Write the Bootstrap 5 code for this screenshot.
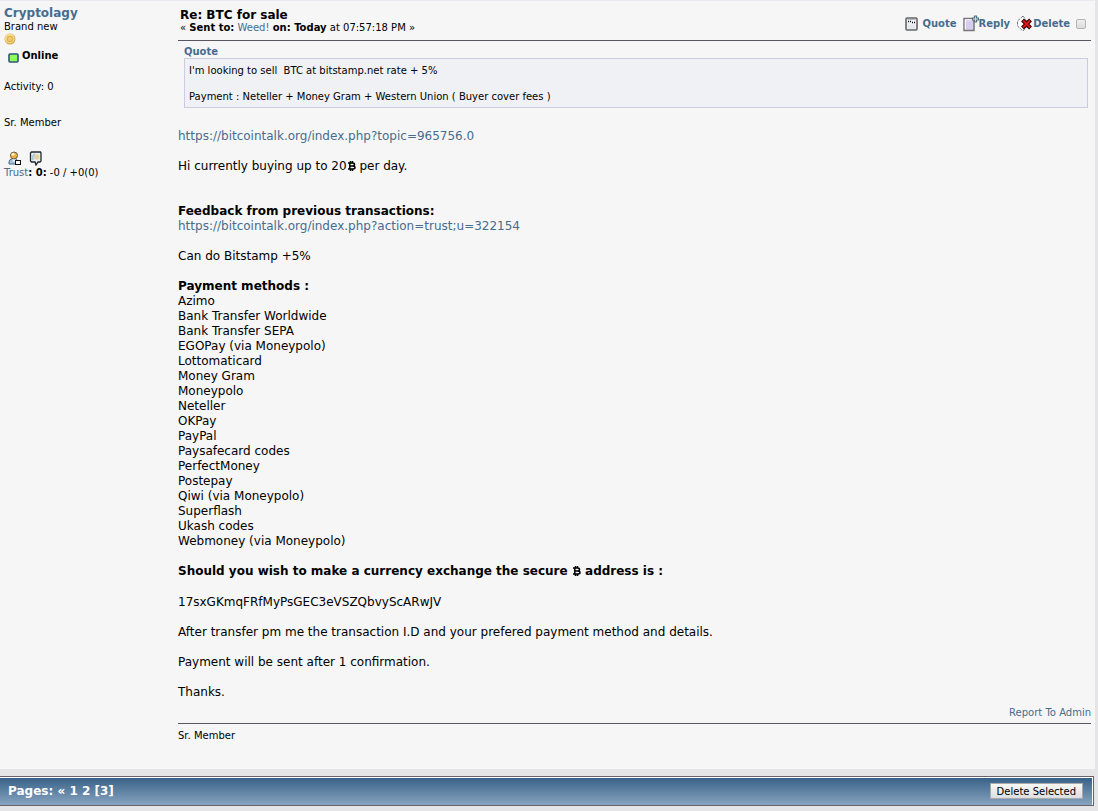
<!DOCTYPE html>
<html lang="en">
<head>
<meta charset="utf-8">
<meta name="viewport" content="width=device-width, initial-scale=1">
<title>Re: BTC for sale</title>
<link rel="stylesheet" href="https://cdn.jsdelivr.net/npm/bootstrap@5.3.0/dist/css/bootstrap.min.css">
<style>
body{background:#e5e5e8;color:#000;font:12px/15px Verdana,"DejaVu Sans",sans-serif}
a{color:#476c8e;text-decoration:none}
a:hover{text-decoration:underline}
svg{display:block;flex:none}
.post{background:#f6f6f6;border-top:1px solid #e9e9f2;margin-right:3px}
.author{width:178px;flex:none;padding:5px 4px}
.tiny{font-size:10px;line-height:13px}
.name{font-size:12px;line-height:14px}
.online{height:14px;margin-top:4px;padding-left:4px;gap:3px}
.activity{margin-top:17px}
.rank{margin-top:23px}
.contact{margin:22px 0 0 4px}
.content{padding:6px 4px 27px 0}
.subject{border-bottom:1px solid #5b5560;padding:0 0 7px 2px}
.subject h1{font-size:12px;line-height:16px}
.actions{font-size:10px;padding:7px 5px 0 0;gap:6px}
.actions input{appearance:none;width:10px;height:10px;border:1px solid #b4b4b4;border-radius:2px;background:linear-gradient(#f0f0f0,#dcdcdc);margin:0}
.actions input:checked{background:#476c8e}
.quoted{margin:4px 3px 0 6px}
.quoted blockquote{background:#f0f1f4;border:1px solid #cccce0;padding:5px 4px 4px;margin:0;white-space:pre-wrap}
.message{margin-top:21px}
.message p,.message ul{margin-bottom:15px}
.message .apart{margin-top:30px}
.message .address{margin-top:16px}
.btc{display:inline-block;vertical-align:-1px}
.report{margin-top:6px}
.signature{border-top:1px solid #5b5560;margin-top:4px;padding-top:5px}
.pager{margin:7px 4px 0 0;border:1px solid #6a6468;border-left:0;box-shadow:inset 0 1px #fff,inset -1px 0 #fff;background:linear-gradient(#355f86,#88a4c0);height:30px;padding:0 10px 0 8px;color:#fff}
.pager a{color:#fff}
.remove{font-size:10px;line-height:13px;border:1px solid #a9a9a9;background:linear-gradient(#f8f8f8,#dedede);color:#000;padding:0 6px;height:16px}
</style>
</head>
<body>
<article class="post d-flex">
  <aside class="author tiny">
    <a href="#" class="name d-block fw-bold">Cryptolagy</a>
    <div>Brand new</div>
    <svg width="12" height="12" viewBox="0 0 12 12"><circle cx="6" cy="6" r="5.500" fill="#d9a94c"/><circle cx="5.700" cy="5.500" r="4.800" fill="#f5dc90"/><circle cx="6" cy="6" r="3.300" fill="#ddb04c"/><circle cx="6" cy="6" r="2.300" fill="#efca6c"/></svg>
    <div class="online d-flex"><svg class="mt-1" width="11" height="10"><rect x="1" y="1" width="9" height="8" rx="1" fill="#8dff5b" stroke="#31517b" stroke-width="1.600"/></svg><b>Online</b></div>
    <div class="activity">Activity: 0</div>
    <div class="rank">Sr. Member</div>
    <div class="contact d-flex gap-2">
      <a href="#" aria-label="Profile"><svg width="13" height="15" viewBox="0 0 13 15"><path d="M1 13v-2q0-3 4-3.500t5 3.500v2z" fill="#a6c4e0" stroke="#4a6684"/><circle cx="6" cy="4.500" r="3.500" fill="#efb23c" stroke="#6a5b44"/><circle cx="5" cy="3.200" r="1.500" fill="#fff3c6"/><path d="M4 8.500l2 2.500 2-2.500z" fill="#f2f7fc"/><rect x="7.500" y="9.500" width="5" height="4" fill="#fff" stroke="#111"/></svg></a>
      <a href="#" aria-label="Personal message"><svg width="13" height="15" viewBox="0 0 13 15"><path d="M2.500 1h9l.5 1v8l-1 1H9l-2 3-1-3H2.500l-1-1V2z" fill="#e9eef3" stroke="#20272d" stroke-width="1.300"/><circle cx="7.700" cy="6" r="2.800" fill="#e2d3a0"/><path d="M4 9q-1-5 2-6" stroke="#abc4dc" stroke-width="1.600" fill="none"/></svg></a>
    </div>
    <div><a href="#">Trust</a><b>: 0:</b> -0 / +0(0)</div>
  </aside>
  <div class="content flex-grow-1">
    <header class="subject d-flex justify-content-between">
      <div>
        <h1 class="fw-bold mb-0">Re: BTC for sale</h1>
        <div class="tiny lh-1">« <b>Sent to:</b> <a href="#">Weed!</a> <b>on: Today</b> at 07:57:18 PM »</div>
      </div>
      <div class="actions d-flex align-items-center fw-bold">
        <a href="#" class="d-flex align-items-center"><svg class="me-1" width="13" height="14" viewBox="0 0 13 14"><rect x="1" y="1" width="11" height="12" rx="1" fill="#eeeff4" stroke="#666" stroke-width="1.600"/><path d="M2.500 2.500h8" stroke="#b9b9c4"/><path d="M3 4.500h1M5 4.500h1M7 5.500h1M9 5.500h1" stroke="#111" stroke-width="1.600"/><path d="M3 9h7M3 11h7" stroke="#dfe0e8"/></svg>Quote</a>
        <a href="#" class="d-flex align-items-center"><svg width="16" height="17" viewBox="0 0 16 17"><path d="M1 3.500h10v12H1z" fill="#d6ccec" stroke="#777" stroke-width="1.500"/><path d="M2.300 14.500V4.800H10" stroke="#fff" fill="none"/><path d="M11.500 1h2v2h2v2h-2v2h-2V5h-2V3h2z" fill="#dfe8ee" stroke="#55707f" stroke-width="1.200"/></svg>Reply</a>
        <a href="#" class="d-flex align-items-center"><svg width="17" height="17" viewBox="0 0 17 17"><path d="M7 1L1.500 6v5L7 16l6-7z" fill="#fff" stroke="#777" stroke-dasharray="3 1"/><path d="M6.500 5l8 8M14.500 5l-8 8" stroke="#200" stroke-width="4"/><path d="M7 5.500l7 7M14 5.500l-7 7" stroke="#e5141c" stroke-width="2"/></svg>Delete</a>
        <input type="checkbox" aria-label="Select message">
      </div>
    </header>
    <section class="quoted tiny">
      <a href="#" class="fw-bold">Quote</a>
      <blockquote>I'm looking to sell  BTC at bitstamp.net rate + 5%

Payment : Neteller + Money Gram + Western Union ( Buyer cover fees )</blockquote>
    </section>
    <section class="message">
      <p><a href="#">https://bitcointalk.org/index.php?topic=965756.0</a></p>
      <p>Hi currently buying up to 20<svg class="btc" width="9" height="10" viewBox="0 0 9 10"><path d="M1 2h4.500q2 0 2 1.500T5.500 5q2.500 0 2.500 1.500T6 8H1M2.800 2v6M3 5h3M3.500 0v2M5.500 0v2M3.500 8v2M5.500 8v2" fill="none" stroke="#000" stroke-width="1.500"/></svg> per day.</p>
      <p class="apart"><b>Feedback from previous transactions:</b><br><a href="#">https://bitcointalk.org/index.php?action=trust;u=322154</a></p>
      <p>Can do Bitstamp +5%</p>
      <b>Payment methods :</b>
      <ul class="list-unstyled">
        <li>Azimo</li><li>Bank Transfer Worldwide</li><li>Bank Transfer SEPA</li><li>EGOPay (via Moneypolo)</li><li>Lottomaticard</li><li>Money Gram</li><li>Moneypolo</li><li>Neteller</li><li>OKPay</li><li>PayPal</li><li>Paysafecard codes</li><li>PerfectMoney</li><li>Postepay</li><li>Qiwi (via Moneypolo)</li><li>Superflash</li><li>Ukash codes</li><li>Webmoney (via Moneypolo)</li>
      </ul>
      <p class="fw-bold">Should you wish to make a currency exchange the secure <svg class="btc" width="9" height="10" viewBox="0 0 9 10"><path d="M1 2h4.500q2 0 2 1.500T5.500 5q2.500 0 2.500 1.500T6 8H1M2.800 2v6M3 5h3M3.500 0v2M5.500 0v2M3.500 8v2M5.500 8v2" fill="none" stroke="#000" stroke-width="1.500"/></svg> address is :</p>
      <p class="address">17sxGKmqFRfMyPsGEC3eVSZQbvyScARwJV</p>
      <p>After transfer pm me the transaction I.D and your prefered payment method and details.</p>
      <p>Payment will be sent after 1 confirmation.</p>
      <p class="mb-0">Thanks.</p>
    </section>
    <div class="report tiny text-end"><a href="#">Report To Admin</a></div>
    <footer class="signature tiny">Sr. Member</footer>
  </div>
</article>
<nav class="pager d-flex justify-content-between align-items-center fw-bold" aria-label="Pages">
  <div>Pages: <a href="#">«</a> <a href="#">1</a> <a href="#">2</a> [3]</div>
  <button type="button" class="remove">Delete Selected</button>
</nav>
<script src="https://cdn.jsdelivr.net/npm/bootstrap@5.3.0/dist/js/bootstrap.bundle.min.js"></script>
</body>
</html>
